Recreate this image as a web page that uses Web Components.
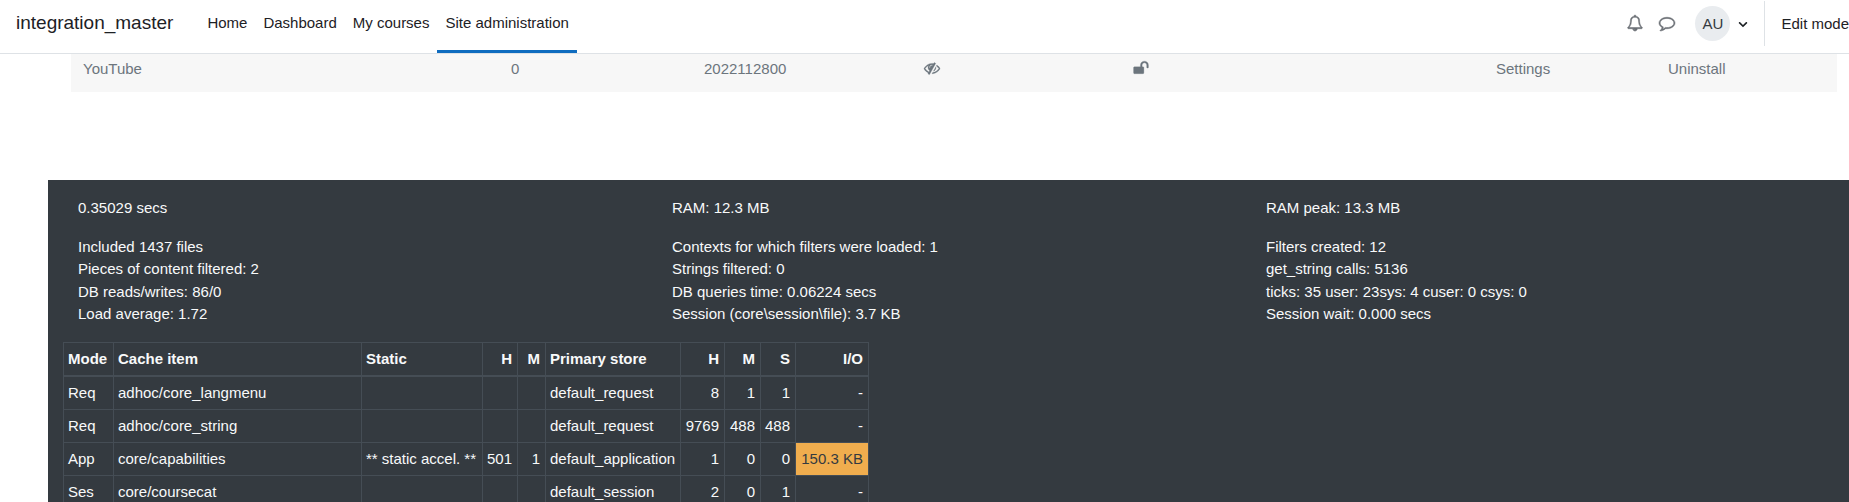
<!DOCTYPE html>
<html lang="en">
<head>
<meta charset="utf-8">
<title>integration_master: Site administration</title>
<style>
body { margin: 0; background: #fff; color: #1d2125; font-family: "Liberation Sans", Arial, sans-serif; font-size: 15px; line-height: 1.5; overflow: hidden; }
</style>
</head>
<body>
<site-header brand="integration_master">
  <nav-link href="#home">Home</nav-link>
  <nav-link href="#dashboard">Dashboard</nav-link>
  <nav-link href="#courses">My courses</nav-link>
  <nav-link href="#admin" active>Site administration</nav-link>
  <user-tools slot="tools" initials="AU"></user-tools>
</site-header>
<main>
  <plugin-table></plugin-table>
</main>
<performance-info></performance-info>

<script>
const ICONS = {
  bell: 'M912 1696q0-16-16-16-59 0-101.5-42.5t-42.5-101.5q0-16-16-16t-16 16q0 73 51.5 124.5t124.5 51.5q16 0 16-16zm-666-288h1300q-266-300-266-832 0-51-24-105t-69-103-121.5-80.5-169.5-31.5-169.5 31.5-121.5 80.5-69 103-24 105q0 532-266 832zm1482 0q0 52-38 90t-90 38h-448q0 106-75 181t-181 75-181-75-75-181h-448q-52 0-90-38t-38-90q50-42 91-88t85-119.5 74.5-158.5 50-206 19.5-260q0-152 117-282.5t307-158.5q-8-19-8-39 0-40 28-68t68-28 68 28 28 68q0 20-8 39 190 28 307 158.5t117 282.5q0 139 19.5 260t50 206 74.5 158.5 85 119.5 91 88z',
  comment: 'M896 384q-204 0-381.5 69.5t-282 187.5-104.5 255q0 112 71.5 213.5t201.5 175.5l87 50-27 96q-24 91-70 172 152-63 275-171l43-38 57 6q69 8 130 8 204 0 381.5-69.5t282-187.5 104.5-255-104.5-255-282-187.5-381.5-69.5zm896 512q0 174-120 321.5t-326 233-450 85.5q-70 0-145-8-198 175-460 242-49 14-114 22h-5q-15 0-27-10.5t-16-27.5v-1q-3-4-.5-12t2-10 4.5-9.5l6-9 7-8.5 8-9q7-8 31-34.5t34.5-38 31-39.5 32.5-51 27-59 26-76q-157-89-247.5-220t-90.5-281q0-174 120-321.5t326-233 450-85.5 450 85.5 326 233 120 321.5z',
  hidden: 'M555 1335l78-141q-87-63-136-159t-49-203q0-121 61-225-229 117-381 353 167 258 427 375zm389-759q0-20-14-34t-34-14q-125 0-214.5 89.5t-89.5 214.5q0 20 14 34t34 14 34-14 14-34q0-86 61-147t147-61q20 0 34-14t14-34zm363-191q0 7-1 9-105 188-315 566t-316 567l-49 89q-10 16-28 16-12 0-134-70-16-10-16-28 0-12 44-87-143-65-263.5-173t-208.5-245q-20-31-20-69t20-69q153-235 380-371t496-136q89 0 180 17l54-97q10-16 28-16 5 0 18 6t31 15.5 33 18.5 31.5 18.5 19.5 11.5q16 10 16 27zm37 447q0 139-79 253.5t-209 164.5l280-502q8 45 8 84zm448 128q0 35-20 69-39 64-109 145-150 172-347.5 267t-419.5 95l74-132q212-18 392.5-137t301.5-307q-115-179-282-294l63-112q95 64 182.5 153t144.5 184q20 34 20 69z',
  unlock: 'M1728 576v256q0 26-19 45t-45 19h-64q-26 0-45-19t-19-45v-256q0-106-75-181t-181-75-181 75-75 181v192h96q40 0 68 28t28 68v576q0 40-28 68t-68 28h-960q-40 0-68-28t-28-68v-576q0-40 28-68t68-28h672v-192q0-185 131.5-316.5t316.5-131.5 316.5 131.5 131.5 316.5z',
  chevron: 'M1640 740l-700 700q-19 19-45 19t-45-19l-700-700q-19-19-19-45.5t19-45.5l110-110q19-19 45-19t45 19l545 545 545-545q19-19 45-19t45 19l110 110q19 19 19 45.5t-19 45.5z'
};

class Base extends HTMLElement {
  connectedCallback() {
    if (!this.shadowRoot) this.attachShadow({ mode: 'open' }).innerHTML = this.render();
  }
}

customElements.define('ui-icon', class extends Base {
  render() {
    return `<style>
      :host { display: inline-block; width: 16px; height: 16px; }
      svg { display: block; width: 100%; height: 100%; overflow: visible; fill: currentColor; stroke: currentColor; stroke-width: var(--icon-weight, 0); }
    </style><svg viewBox="0 0 1792 1792" aria-hidden="true"><path d="${ICONS[this.getAttribute('name')]}"/></svg>`;
  }
});

customElements.define('site-header', class extends Base {
  render() {
    return `<style>
      :host { display: block; background: #fff; border-bottom: 1px solid #dee2e6; }
      header { display: flex; height: 53px; padding-left: 16px; }
      .brand { font-size: 19px; line-height: 46px; color: inherit; text-decoration: none; margin-right: 26px; }
      nav { display: flex; }
      .tools { margin-left: auto; }
    </style>
    <header><a class="brand" href="#site">${this.getAttribute('brand')}</a><nav><slot></slot></nav><div class="tools"><slot name="tools"></slot></div></header>`;
  }
});

customElements.define('nav-link', class extends Base {
  render() {
    return `<style>
      :host { display: block; }
      a { display: block; box-sizing: border-box; height: 53px; line-height: 46px; padding: 0 8px; color: inherit; text-decoration: none; white-space: nowrap; border-bottom: 3px solid transparent; }
      :host([active]) a { border-color: #0f6cbf; }
    </style><a href="${this.getAttribute('href')}"><slot></slot></a>`;
  }
});

customElements.define('user-tools', class extends Base {
  render() {
    return `<style>
      :host { display: flex; align-items: center; height: 46px; }
      button { display: flex; align-items: center; padding: 0; border: 0; background: none; font: inherit; color: #6a6f75; }
      .note { margin-right: 16px; --icon-weight: 60; }
      .user { margin-left: 4px; gap: 8px; color: #1d2125; }
      .avatar { width: 35px; height: 35px; line-height: 35px; border-radius: 50%; background: #e9ecef; color: #343a40; text-align: center; }
      .user ui-icon { width: 10px; height: 10px; margin-top: 2px; }
      .edit { height: 45px; line-height: 45px; margin-left: 16px; padding-left: 16px; border-left: 1px solid #dee2e6; white-space: nowrap; }
    </style>
    <button class="note" aria-label="Notifications"><ui-icon name="bell"></ui-icon></button>
    <button class="note" aria-label="Messages"><ui-icon name="comment"></ui-icon></button>
    <button class="user" aria-label="User menu"><span class="avatar">${this.getAttribute('initials')}</span><ui-icon name="chevron"></ui-icon></button>
    <span class="edit">Edit mode</span>`;
  }
});

customElements.define('plugin-table', class extends Base {
  render() {
    const cols = [428, 193, 220, 209, 363, 172, 181].map(w => `<col style="width:${w}px">`).join('');
    return `<style>
      :host { display: block; margin: 0 12px 88px 71px; }
      table { width: 100%; table-layout: fixed; border-collapse: collapse; background: #f7f7f7; color: #6c757d; }
      td { height: 22px; line-height: 22px; padding: 4px 12px 12px; vertical-align: top; }
      a { color: inherit; text-decoration: none; }
      ui-icon { display: block; margin-top: 2px; --icon-weight: 30; }
    </style>
    <table><colgroup>${cols}</colgroup><tbody><tr>
      <td>YouTube</td><td>0</td><td>2022112800</td>
      <td><a href="#show" aria-label="Enable"><ui-icon name="hidden"></ui-icon></a></td>
      <td><a href="#lock" aria-label="Lock"><ui-icon name="unlock"></ui-icon></a></td>
      <td><a href="#settings">Settings</a></td><td><a href="#uninstall">Uninstall</a></td>
    </tr></tbody></table>`;
  }
});

customElements.define('performance-info', class extends Base {
  render() {
    const stats = [
      'Included 1437 files', 'Contexts for which filters were loaded: 1', 'Filters created: 12',
      'Pieces of content filtered: 2', 'Strings filtered: 0', 'get_string calls: 5136',
      'DB reads/writes: 86/0', 'DB queries time: 0.06224 secs', 'ticks: 35 user: 23sys: 4 cuser: 0 csys: 0',
      'Load average: 1.72', 'Session (core\\session\\file): 3.7 KB', 'Session wait: 0.000 secs'
    ];
    const list = items => `<ul>${items.map(s => `<li>${s}</li>`).join('')}</ul>`;
    return `<style>
      :host { display: block; margin-left: 48px; padding: 17px 4px 16px 15px; background: #343a40; color: #f8f9fa; }
      ul { display: grid; grid-template-columns: repeat(3, 1fr); list-style: none; margin: 0 0 16px; padding: 0; }
      li { padding-left: 15px; }
    </style>
    ${list(['0.35029 secs', 'RAM: 12.3 MB', 'RAM peak: 13.3 MB'])}
    ${list(stats)}
    <cache-table></cache-table>`;
  }
});

customElements.define('cache-table', class extends Base {
  render() {
    const widths = [50, 248, 121, 35, 28, 135, 44, 36, 35, 73];
    const head = ['Mode', 'Cache item', 'Static', 'H', 'M', 'Primary store', 'H', 'M', 'S', 'I/O'];
    const rows = [
      ['Req', 'adhoc/core_langmenu', '', '', '', 'default_request', 8, 1, 1, '-'],
      ['Req', 'adhoc/core_string', '', '', '', 'default_request', 9769, 488, 488, '-'],
      ['App', 'core/capabilities', '** static accel. **', 501, 1, 'default_application', 1, 0, 0, '150.3 KB'],
      ['Ses', 'core/coursecat', '', '', '', 'default_session', 2, 0, 1, '-']
    ];
    const cls = (v, i) => [[3, 4, 6, 7, 8, 9].includes(i) && 'num', v === '150.3 KB' && 'warn'].filter(Boolean).join(' ');
    const cells = (tag, r) => `<tr>${r.map((v, i) => `<${tag} class="${cls(v, i)}">${v}</${tag}>`).join('')}</tr>`;
    return `<style>
      :host { display: block; }
      table { width: 806px; table-layout: fixed; border-collapse: collapse; line-height: 22px; }
      th, td { height: 22px; padding: 5px 5px 5px 4px; border: 1px solid #454d55; text-align: left; white-space: nowrap; }
      th { border-bottom-width: 2px; }
      .num { text-align: right; }
      .warn { background: #f0ad4e; color: #343a40; }
    </style>
    <table><colgroup>${widths.map(w => `<col style="width:${w}px">`).join('')}</colgroup>
    <thead>${cells('th', head)}</thead><tbody>${rows.map(r => cells('td', r)).join('')}</tbody></table>`;
  }
});
</script>
</body>
</html>
